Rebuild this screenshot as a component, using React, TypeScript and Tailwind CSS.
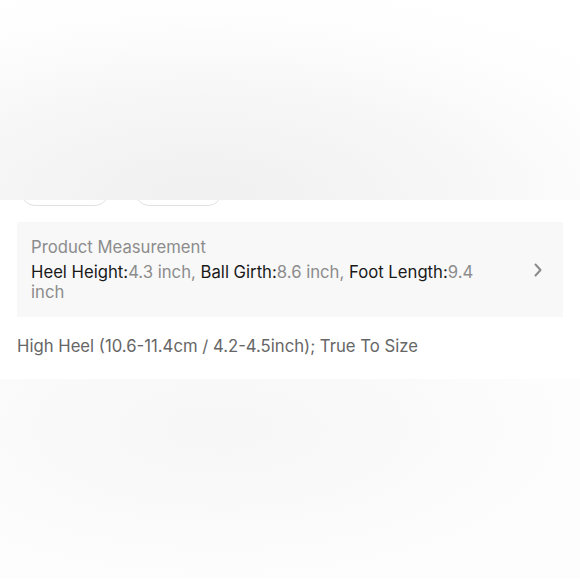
import React from 'react';

const measurements = [
    { label: 'Heel Height', value: '4.3 inch' },
    { label: 'Ball Girth', value: '8.6 inch' },
    { label: 'Foot Length', value: '9.4 inch' },
];

const ChevronRight = () => (
    <svg width="10" height="16" viewBox="0 0 10 16" fill="none" className="shrink-0">
        <path d="M2.5 2.5 L7.5 8 L2.5 13.5" stroke="#8a8a8a" strokeWidth="2" strokeLinecap="round" strokeLinejoin="round" />
    </svg>
);

const App: React.FC = () => {
    return (
        <div className="w-[580px] h-[580px] bg-white overflow-hidden font-['Inter','Liberation_Sans',sans-serif]">
            <div className="relative">
                {/* size chips hidden under the sheet */}
                <div className="flex gap-[26px] pl-[21px] pt-[172px]">
                    <div className="w-[88px] h-[34px] rounded-[14px] border border-[#e2e2e2]" />
                    <div className="w-[87px] h-[34px] rounded-[14px] border border-[#e2e2e2]" />
                </div>
                <div className="absolute top-0 left-0 w-[580px] h-[200px] bg-[radial-gradient(ellipse_90%_110%_at_35%_100%,#f0f0f0_0%,#f6f6f6_45%,#fdfdfd_80%,#ffffff_100%)]" />
            </div>

            <div className="px-[17px] pt-[16px]">
                <div className="flex items-center justify-between bg-[#f8f8f8] pl-[14px] pr-[20px] h-[95px]">
                    <div className="w-[470px]">
                        <div className="text-[16.7px] leading-[20px] text-[#8c8c8c]">Product Measurement</div>
                        <div className="mt-[5px] text-[16.7px] leading-[20px]">
                            {measurements.map((m, i) => (
                                <React.Fragment key={m.label}>
                                    <span className="text-[#1a1a1a]">{m.label}:</span>
                                    <span className="text-[#8c8c8c]">
                                        {m.value}
                                        {i < measurements.length - 1 ? ', ' : ''}
                                    </span>
                                </React.Fragment>
                            ))}
                        </div>
                    </div>
                    <ChevronRight />
                </div>
                <p className="mt-[19px] text-[16.7px] leading-[20px] text-[#666666]">
                    High Heel (10.6-11.4cm / 4.2-4.5inch); True To Size
                </p>
            </div>

            <div className="mt-[23px] h-[200px] bg-[radial-gradient(ellipse_60%_75%_at_38%_25%,#f7f7f7_0%,#f9f9f9_45%,#fbfbfb_75%,#fdfdfd_100%)]" />
        </div>
    );
};

export default App;
